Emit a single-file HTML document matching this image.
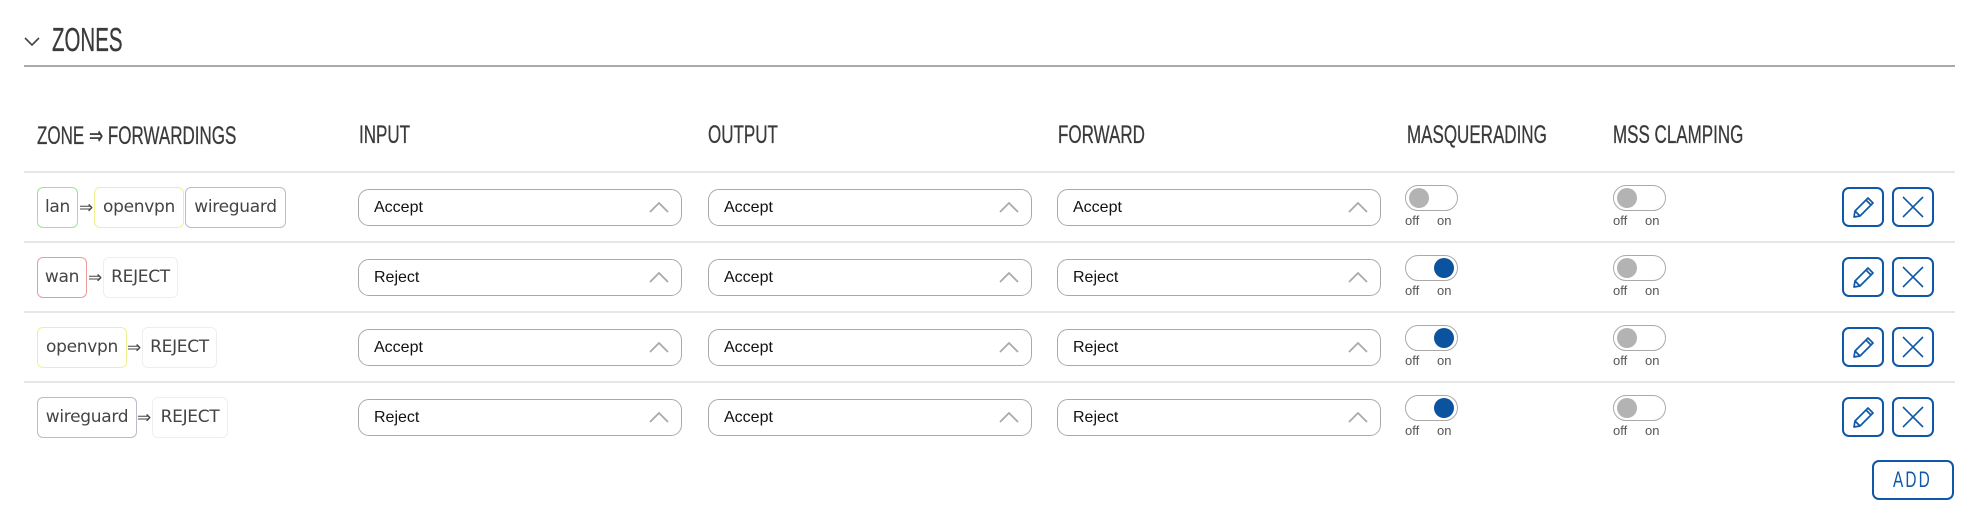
<!DOCTYPE html>
<html><head><meta charset="utf-8"><style>
*{box-sizing:border-box;margin:0;padding:0}
body{width:1971px;height:508px;background:#fff;position:relative;overflow:hidden;font-family:"Liberation Sans",Arial,sans-serif;color:#333}
.a{position:absolute}
.h{font-family:"Liberation Sans",sans-serif;color:#3a3a3a;text-transform:uppercase;transform-origin:0 0;white-space:nowrap;-webkit-text-stroke:0.3px #3a3a3a}
.hd{font-size:25px;top:121px;transform:scaleX(0.68)}
.sep{position:absolute;left:24px;width:1931px;height:2px;background:#e6e6e6}
.tag{position:absolute;height:41px;border:1px solid;border-radius:6px;font-size:17px;line-height:39px;text-align:center;color:#444;font-family:"DejaVu Sans","Liberation Sans",sans-serif;letter-spacing:-0.3px}
.arr{position:absolute;font-size:17px;line-height:41px;color:#444}
.sel{position:absolute;height:37px;border:1px solid #aaa;border-radius:11px;font-size:16px;line-height:35px;padding-left:15px;color:#111}
.sel svg{position:absolute;right:12px;top:11px}
.tg{position:absolute;width:53px;height:26px;border:1px solid #aaa;border-radius:13px}
.tg i{position:absolute;top:2px;width:20px;height:20px;border-radius:50%;background:#b3b3b3;left:3px}
.tg.on i{left:28px;background:#0b529f}
.lb{position:absolute;font-size:13px;color:#555}
.btn{position:absolute;width:42px;height:40px;border:2px solid #0f58a8;border-radius:7px}
.btn svg{position:absolute;left:0;top:0}
</style></head><body>
<svg class="a" style="left:24px;top:37px" width="16" height="10"><path d="M1 1 L8 8 L15 1" fill="none" stroke="#444" stroke-width="1.6"/></svg>
<div class="a h" style="left:52px;top:20px;font-size:33px;line-height:40px;transform:scaleX(0.62)">Zones</div>
<div class="a" style="left:24px;top:65px;width:1931px;height:2px;background:#aaa"></div>

<div class="a h hd" style="left:37px">Zone ⇒ Forwardings</div>
<div class="a h hd" style="left:359px">Input</div>
<div class="a h hd" style="left:708px">Output</div>
<div class="a h hd" style="left:1058px">Forward</div>
<div class="a h hd" style="left:1407px">Masquerading</div>
<div class="a h hd" style="left:1613px">MSS Clamping</div>

<div class="sep" style="top:171px"></div>
<div class="sep" style="top:241px"></div>
<div class="sep" style="top:311px"></div>
<div class="sep" style="top:381px"></div>

<div class="tag" style="left:37px;top:187px;width:41px;border-color:#9be39b">lan</div>
<div class="arr" style="left:79px;top:187px">⇒</div>
<div class="tag" style="left:94px;top:187px;width:90px;border-color:#f0f090">openvpn</div>
<div class="tag" style="left:185px;top:187px;width:101px;border-color:#bbbbcc">wireguard</div>

<div class="tag" style="left:37px;top:257px;width:50px;border-color:#ee9999">wan</div>
<div class="arr" style="left:88px;top:257px">⇒</div>
<div class="tag" style="left:103px;top:257px;width:75px;border-color:#eee">REJECT</div>

<div class="tag" style="left:37px;top:327px;width:90px;border-color:#f0f090">openvpn</div>
<div class="arr" style="left:127px;top:327px">⇒</div>
<div class="tag" style="left:142px;top:327px;width:75px;border-color:#eee">REJECT</div>

<div class="tag" style="left:37px;top:397px;width:100px;border-color:#bbbbcc">wireguard</div>
<div class="arr" style="left:137px;top:397px">⇒</div>
<div class="tag" style="left:152px;top:397px;width:76px;border-color:#eee">REJECT</div>

<div id="sels"></div>
<script>
var vals=[["Accept","Accept","Accept"],["Reject","Accept","Reject"],["Accept","Accept","Reject"],["Reject","Accept","Reject"]];
var xs=[358,708,1057],ws=[324,324,324];
var masq=[0,1,1,1];var h="";
for(var r=0;r<4;r++){var t=189+70*r;
for(var c=0;c<3;c++){h+='<div class="sel" style="left:'+xs[c]+'px;top:'+t+'px;width:'+ws[c]+'px">'+vals[r][c]+'<svg width="20" height="12"><path d="M1 11 L10 2 L19 11" fill="none" stroke="#aaa" stroke-width="1.8"/></svg></div>';}
var tt=185+70*r;
h+='<div class="tg'+(masq[r]?' on':'')+'" style="left:1405px;top:'+tt+'px"><i></i></div>';
h+='<div class="lb" style="left:1405px;top:'+(tt+28)+'px">off</div><div class="lb" style="left:1437px;top:'+(tt+28)+'px">on</div>';
h+='<div class="tg" style="left:1613px;top:'+tt+'px"><i></i></div>';
h+='<div class="lb" style="left:1613px;top:'+(tt+28)+'px">off</div><div class="lb" style="left:1645px;top:'+(tt+28)+'px">on</div>';
var bt=187+70*r;
h+='<div class="btn" style="left:1842px;top:'+bt+'px"><svg width="38" height="36"><path d="M10 28 L11 22 L24 9 L29 14 L16 27 Z M22 11 L27 16 M11 22 L16 27" fill="none" stroke="#0f58a8" stroke-width="1.7" stroke-linejoin="round"/></svg></div>';
h+='<div class="btn" style="left:1892px;top:'+bt+'px"><svg width="38" height="36"><path d="M9 8 L29 28 M29 8 L9 28" stroke="#0f58a8" stroke-width="1.6"/></svg></div>';
}
document.getElementById("sels").outerHTML=h;
</script>
<div class="btn" style="left:1872px;top:460px;width:82px;height:40px;border-radius:7px"></div>
<div class="a" style="left:1893px;top:466px;font-size:22px;line-height:28px;color:#0f58a8;letter-spacing:3px;transform:scaleX(0.7);transform-origin:0 0">ADD</div>
</body></html>
